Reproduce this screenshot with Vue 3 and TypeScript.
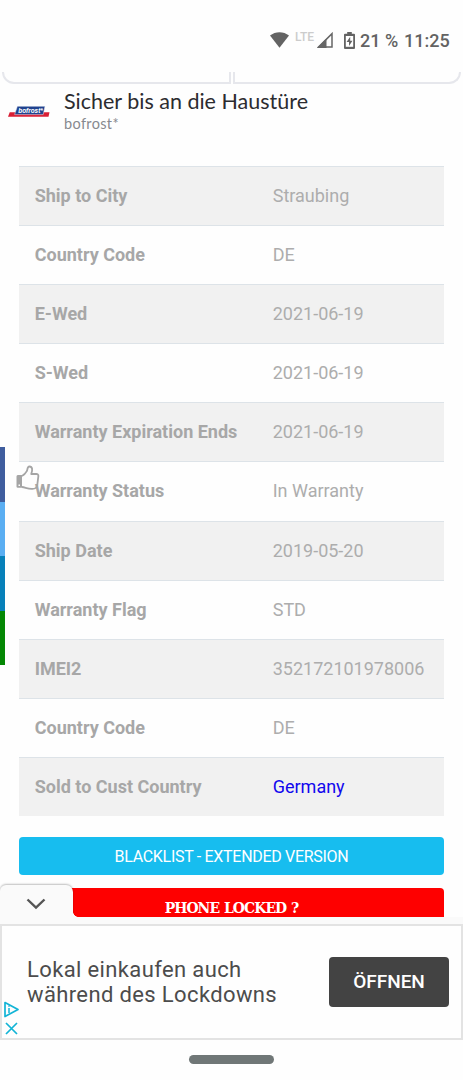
<script setup lang="ts">
interface Row {
  label: string
  value: string
  link?: boolean
}

const rows: Row[] = [
  { label: 'Ship to City', value: 'Straubing' },
  { label: 'Country Code', value: 'DE' },
  { label: 'E-Wed', value: '2021-06-19' },
  { label: 'S-Wed', value: '2021-06-19' },
  { label: 'Warranty Expiration Ends', value: '2021-06-19' },
  { label: 'Warranty Status', value: 'In Warranty' },
  { label: 'Ship Date', value: '2019-05-20' },
  { label: 'Warranty Flag', value: 'STD' },
  { label: 'IMEI2', value: '352172101978006' },
  { label: 'Country Code', value: 'DE' },
  { label: 'Sold to Cust Country', value: 'Germany', link: true },
]

const networks: string[] = ['facebook', 'twitter', 'linkedin', 'sharing']
</script>

<template>
  <div class="screen">
    <header class="status">
      <svg class="wifi" width="19" height="16" viewBox="0 0 19 16">
        <path d="M0 3.6C5.5-1 13.500-1 19 3.600L9.500 15.800Z" fill="#636363" />
      </svg>
      <span class="lte">LTE</span>
      <svg class="signal" width="16" height="16" viewBox="0 0 16 16">
        <path d="M1.500 15.100L15 1.600V15.100Z" fill="none" stroke="#666" stroke-width="1.500" />
        <path d="M0 16L9.500 6.500V16Z" fill="#666" />
      </svg>
      <svg class="battery" width="11" height="17" viewBox="0 0 11 17">
        <path d="M3.200 0H7.800V1.800H10Q11 1.800 11 2.800V16Q11 17 10 17H1Q0 17 0 16V2.800Q0 1.800 1 1.800H3.200Z" fill="#636363" />
        <path d="M1.800 4H9.200V14.800H1.800Z" fill="#fff" />
        <path d="M6.200 4.800L2.600 10H5V14L8.500 8.800H6.200Z" fill="#636363" />
      </svg>
      <span class="charge">21 %</span>
      <span class="clock">11:25</span>
    </header>

    <div class="cards">
      <div class="card card-left"></div>
      <div class="card card-right"></div>
    </div>

    <section class="sponsor">
      <svg class="logo" width="42" height="12" viewBox="0 0 42 12">
        <path d="M1.700 6.200H41.500L40.500 10.800H0Z" fill="#d81f35" />
        <path d="M9.400 0.300H37L35.200 8.600H6.600Z" fill="#20438f" stroke="#e8ecf5" stroke-width="0.500" />
        <text x="10.300" y="7" textLength="24.500" lengthAdjust="spacingAndGlyphs" class="logo-text">bofrost*</text>
      </svg>
      <div>
        <div class="sponsor-title">Sicher bis an die Haustüre</div>
        <div class="sponsor-name">bofrost*</div>
      </div>
    </section>

    <main class="details">
      <div v-for="(row, i) in rows" :key="i" class="row">
        <span class="label">{{ row.label }}</span>
        <span class="value" :class="{ link: row.link }">{{ row.value }}</span>
      </div>
    </main>

    <div class="actions">
      <div class="btn blacklist"><span>BLACKLIST - EXTENDED VERSION</span></div>
      <div class="btn locked"><span>PHONE LOCKED ?</span></div>
    </div>

    <aside class="share">
      <i v-for="n in networks" :key="n" :class="n"></i>
    </aside>

    <svg class="thumb" width="24" height="26" viewBox="0 0 24 26">
      <path d="M6 11C9 9.500 10 7.500 11 5.800C11.500 4.500 11.200 1.500 13.500 1.500C16.500 1.500 16.800 5 15.200 9H20.500C22.500 9 22.600 10.500 22.200 12.500L21.200 20.500C20.800 23.300 18.500 24 15.500 23.800C11.500 23.700 9 22.300 6 22" fill="none" stroke="#a5a5a5" stroke-width="1.800" stroke-linejoin="round" />
      <path fill-rule="evenodd" d="M1.800 10H6V22.800H1.800Q.5 22.800.5 21.500V11.500Q.5 10 1.800 10ZM2.500 19.500V21H4V19.500Z" fill="#a5a5a5" />
    </svg>

    <div class="anchor">
      <div class="tab">
        <svg width="20" height="12" viewBox="0 0 20 12">
          <path d="M1.500 1.500L10 9.700L18.500 1.500" fill="none" stroke="#555" stroke-width="2.400" />
        </svg>
      </div>
      <div class="lip"></div>
      <div class="banner">
        <p class="copy"><span>Lokal einkaufen auch</span><br><span>während des Lockdowns</span></p>
        <div class="open"><span>ÖFFNEN</span></div>
        <svg class="choices" width="16" height="34" viewBox="0 0 16 34">
          <path d="M1 1.500L14 8.500L1 15.500Z" fill="none" stroke="#12b4d6" stroke-width="1.700" stroke-linejoin="round" />
          <path d="M5 7V12M5 4.500V5.800" stroke="#12b4d6" stroke-width="1.500" />
          <path d="M2 22L13 33M13 22L2 33" stroke="#12b4d6" stroke-width="1.700" />
        </svg>
      </div>
      <div class="nav"><i></i></div>
    </div>
  </div>
</template>

<style>
body {
  margin: 0;
  background: #fff;
}
</style>

<style scoped>
.screen {
  position: relative;
  width: 463px;
  height: 1080px;
  overflow: hidden;
  background: #fefefe;
  font-family: Roboto, "Liberation Sans", sans-serif;
}
.status {
  height: 72px;
  box-sizing: border-box;
  padding: 32px 0 0 270px;
  display: flex;
  align-items: flex-start;
  color: #636363;
  font-weight: 500;
  font-size: 18px;
  line-height: 18px;
}
.lte {
  margin: -2px 0 0 6px;
  width: 21px;
  font-size: 12px;
  line-height: 14px;
  color: #ccc;
  white-space: nowrap;
}
.signal { margin-left: 1px; }
.battery { margin-left: 11px; }
.charge {
  margin-left: 5px;
  width: 44px;
  white-space: nowrap;
}
.clock { letter-spacing: 0; }
.cards {
  height: 12px;
  display: flex;
  gap: 2px;
  padding: 0 2px;
}
.card {
  box-sizing: border-box;
  width: 229px;
  border: 2px solid #e6e7ec;
  border-top: 0;
}
.card-left { border-bottom-left-radius: 12px; }
.card-right { border-bottom-right-radius: 12px; }
.sponsor {
  height: 82px;
  display: flex;
  padding-left: 8px;
}
.logo {
  margin: 22px 14px 0 0;
  flex: none;
}
.logo-text {
  font: italic bold 8px "Liberation Sans", sans-serif;
  fill: #fff;
}
.sponsor-title {
  margin-top: 4px;
  font-family: Lato, sans-serif;
  font-size: 21.500px;
  line-height: 26px;
  color: #2c2c30;
  white-space: nowrap;
}
.sponsor-name {
  margin-top: 1px;
  font-family: Lato, sans-serif;
  font-size: 14.500px;
  line-height: 18px;
  letter-spacing: 0.35px;
  color: #87898f;
}
.details {
  width: 425px;
  height: 650px;
  margin-left: 19px;
  display: grid;
  grid-template-rows: repeat(11, 1fr);
}
.row {
  display: grid;
  grid-template-columns: 238px 1fr;
  align-items: center;
  box-sizing: border-box;
  padding: 0 0 1px 15.700px;
  border-top: 1px solid #dde3e8;
  font-size: 18px;
  color: #adadad;
}
.row:nth-child(odd) { background: #f1f1f1; }
.label {
  font-weight: 700;
  color: #a7a7a7;
}
.value.link { color: #1208ee; }
.actions {
  margin: 21px 0 0 19px;
  width: 425px;
  display: flex;
  flex-direction: column;
  gap: 13px;
}
.btn {
  height: 38px;
  border-radius: 4px;
  color: #fff;
  display: flex;
  align-items: center;
  justify-content: center;
}
.blacklist {
  background: #17bdef;
  font-size: 16px;
  letter-spacing: -0.300px;
}
.locked {
  background: #fe0000;
  font: bold 15.500px "DejaVu Serif", serif;
  font-stretch: condensed;
  letter-spacing: -0.950px;
  word-spacing: 1px;
}
.share {
  position: absolute;
  left: 0;
  top: 447px;
  width: 5px;
  height: 218px;
  display: flex;
  flex-direction: column;
}
.share i { flex: 1; }
.facebook { background: #3f5d9e; }
.twitter { background: #5aaef2; }
.linkedin { background: #0780b9; }
.sharing { background: #048704; }
.thumb {
  position: absolute;
  left: 16px;
  top: 465px;
}
.anchor {
  position: absolute;
  left: 0;
  right: 0;
  bottom: 0;
}
.tab {
  position: relative;
  z-index: 1;
  width: 73px;
  height: 32px;
  border-radius: 6px 7px 0 0;
  background: #fafafa;
  box-shadow: 0 -1px 2px rgba(0, 0, 0, 0.25);
  display: flex;
  justify-content: center;
  box-sizing: border-box;
  padding: 13px 1px 0 0;
}
.tab::after {
  content: "";
  position: absolute;
  left: 73px;
  bottom: 0;
  width: 5px;
  height: 5px;
  background: radial-gradient(circle at 100% 0, transparent 4.500px, #fafafa 5px);
}
.lip {
  position: relative;
  z-index: 1;
  height: 7px;
  background: #fafafa;
}
.banner {
  position: relative;
  height: 116px;
  box-sizing: border-box;
  border: 2px solid #e3e3e3;
  background: #fefefe;
  display: flex;
  align-items: flex-start;
}
.copy {
  margin: 32px 0 0 25px;
  width: 302px;
  font-size: 22px;
  line-height: 24.500px;
  letter-spacing: 0.370px;
  color: #4c4c4c;
  white-space: nowrap;
}
.open {
  margin-top: 31px;
  width: 120px;
  height: 50px;
  box-sizing: border-box;
  padding-bottom: 2px;
  border-radius: 4px;
  background: #434343;
  color: #fff;
  font-size: 19px;
  font-weight: 500;
  display: flex;
  align-items: center;
  justify-content: center;
}
.choices {
  position: absolute;
  left: 2px;
  top: 75px;
}
.nav {
  height: 40px;
  background: #fefefe;
  display: flex;
  justify-content: center;
}
.nav i {
  margin-top: 15px;
  width: 85px;
  height: 9px;
  border-radius: 5px;
  background: #707777;
}
</style>
